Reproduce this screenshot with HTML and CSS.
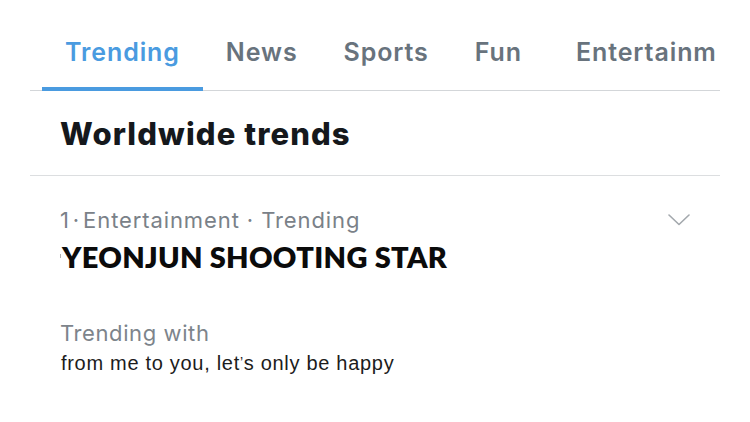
FILE: index.html
```html
<!DOCTYPE html>
<html lang="en">
<head>
<meta charset="utf-8">
<title>Trends</title>
<link rel="stylesheet" href="styles.css">
</head>
<body>
<div class="panel">
  <nav class="tabs">
    <div class="tab active">Trending</div>
    <div class="tab">News</div>
    <div class="tab">Sports</div>
    <div class="tab">Fun</div>
    <div class="tab last">Entertainm</div>
  </nav>
  <section class="heading">
    <h1>Worldwide trends</h1>
  </section>
  <section class="trend">
    <div class="trend-head">
      <div class="meta">1<span class="dot">·</span>Entertainment · Trending</div>
      <svg class="chevron" width="22" height="12" viewBox="0 0 22 12"><path d="M1 1 L11 10.5 L21 1" fill="none" stroke="#a3a8ad" stroke-width="1.6" stroke-linecap="round" stroke-linejoin="round"/></svg>
    </div>
    <div class="title"><span class="tick"></span>YEONJUN SHOOTING STAR</div>
    <div class="with-label">Trending with</div>
    <div class="with-text">from me to you, let<span class="apos">’</span>s only be happy</div>
  </section>
</div>
</body>
</html>
```
FILE: styles.css
```css
html, body {
  margin: 0;
  padding: 0;
  background: #ffffff;
}

.panel {
  margin-left: 30px;
  width: 690px;
  overflow: hidden;
  font-family: Inter, "Liberation Sans", sans-serif;
}

.tabs {
  display: flex;
  padding-left: 12px;
  height: 90px;
  border-bottom: 1px solid #d3d6d9;
  white-space: nowrap;
}

.tab {
  flex: none;
  padding: 38px 23px 0;
  font-size: 25px;
  line-height: 28px;
  font-weight: 600;
  letter-spacing: 0.9px;
  color: #68737d;
  box-sizing: border-box;
  height: 91px;
  margin-bottom: -1px;
}

.tab.last {
  padding-left: 31px;
  padding-right: 0;
}

.tab.active {
  color: #4a9be0;
  border-bottom: 4px solid #4a9be0;
}

.heading {
  padding: 0 0 0 30px;
  height: 84px;
  border-bottom: 1px solid #dcdee0;
}

.heading h1 {
  margin: 0;
  padding-top: 24px;
  font-size: 31px;
  line-height: 38px;
  font-weight: 800;
  color: #15181c;
  letter-spacing: 1.1px;
}

.trend {
  padding: 0 30px 0 30px;
}

.trend-head {
  display: flex;
  justify-content: space-between;
  align-items: flex-start;
  padding-top: 31px;
}

.meta {
  font-size: 22px;
  line-height: 26px;
  letter-spacing: 0.9px;
  color: #7a8188;
}

.dot {
  margin: 0 3px;
}

.chevron {
  margin-top: 7px;
}

.title {
  position: relative;
  margin-top: 8px;
  font-family: Lato, "Liberation Sans", sans-serif;
  font-weight: 800;
  font-size: 29px;
  line-height: 32px;
  color: #0b0b0b;
  padding-left: 2px;
  letter-spacing: 0.3px;
}

.tick {
  position: absolute;
  left: 0;
  top: 13px;
  width: 1px;
  height: 4px;
  background: #b0b0b0;
}

.with-label {
  margin-top: 47px;
  font-size: 22px;
  line-height: 26px;
  letter-spacing: 0.6px;
  color: #7d848b;
}

.with-text {
  margin-top: 4px;
  font-family: "Liberation Sans", Arial, sans-serif;
  font-size: 20px;
  line-height: 24px;
  letter-spacing: 0.7px;
  color: #1c1c1c;
  padding-left: 1px;
}

.apos {
  font-size: 14px;
  vertical-align: 3px;
}
```
